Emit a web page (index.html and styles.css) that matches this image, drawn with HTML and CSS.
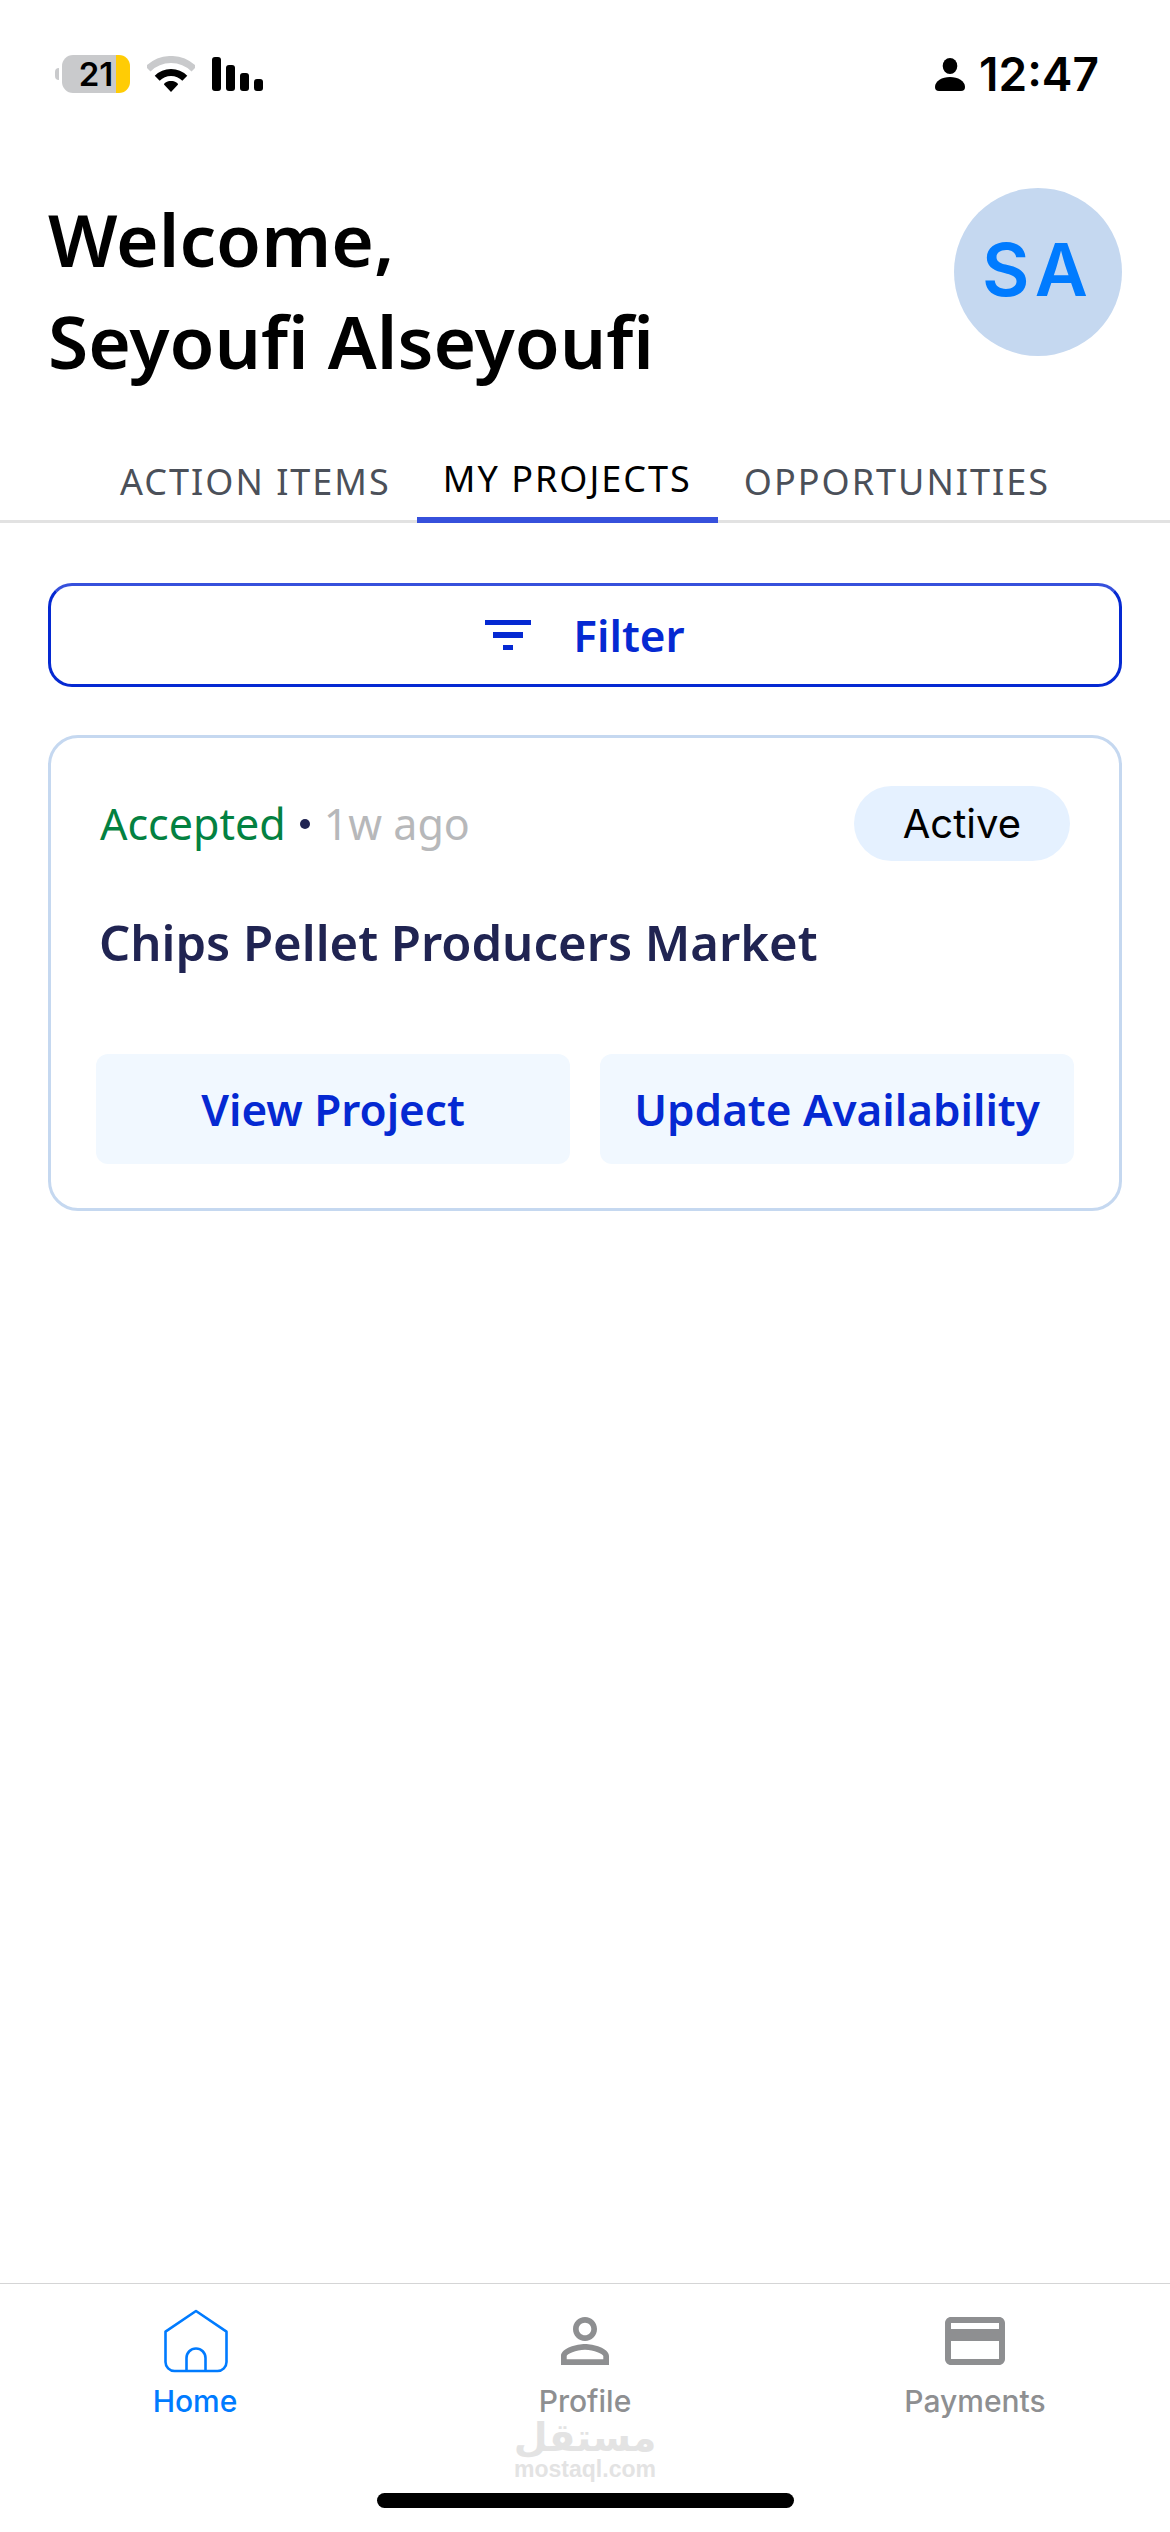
FILE: index.html
```html
<!DOCTYPE html>
<html lang="en">
  <head>
    <meta charset="UTF-8" />
    <meta name="viewport" content="width=device-width" />
    <title>My Projects</title>
    <link rel="stylesheet" href="styles.css">
  </head>
  <body>
    <div class="status_bar">
      <div class="status_bar__group">
        <div class="battery">
          <span class="battery__tip"></span>
          <span class="battery__level">21</span>
        </div>
        <svg class="status_bar__wifi" width="48" height="36" viewBox="0 0 48 36" fill="none" aria-hidden="true">
          <path d="M1 13a32.5 32.5 0 0 1 46 0" stroke="#c9cacc" stroke-width="7" />
          <path d="M10.2 22.2a19.5 19.5 0 0 1 27.6 0" stroke="#000" stroke-width="7" />
          <path d="M24 36l-7-7.5c0-1.5 3-3.5 7-3.5s7 2 7 3.5z" fill="#000" />
        </svg>
        <svg class="status_bar__signal" width="51" height="34" viewBox="0 0 51 34" aria-hidden="true">
          <rect x="0" y="0" width="9" height="34" rx="3" />
          <rect x="14" y="8" width="9" height="26" rx="3" />
          <rect x="28" y="16" width="9" height="18" rx="3" />
          <rect x="42" y="22" width="9" height="12" rx="3" />
        </svg>
      </div>
      <div class="status_bar__group status_bar__group--clock">
        <svg width="30" height="33" viewBox="0 0 30 33" aria-hidden="true">
          <ellipse cx="15" cy="8" rx="7.3" ry="8" />
          <path d="M0 29c0-6 7-10 15-10s15 4 15 10q0 4-4 4H4q-4 0-4-4z" />
        </svg>
        <time class="status_bar__time">12:47</time>
      </div>
    </div>

    <header class="header">
      <h1 class="header__title">Welcome,<br />Seyoufi Alseyoufi</h1>
      <div class="avatar">SA</div>
    </header>

    <nav class="tabs">
      <a href="#action-items" class="tabs__item">ACTION ITEMS</a>
      <a href="#my-projects" class="tabs__item tabs__item--active" aria-current="page">MY PROJECTS</a>
      <a href="#opportunities" class="tabs__item">OPPORTUNITIES</a>
    </nav>

    <main class="main">
      <button type="button" class="filter">
        <svg width="46" height="30" viewBox="0 0 46 30" fill="currentColor" aria-hidden="true">
          <path d="M0 0h46v5H0zM8 12h30v6H8zM18 25h10v5H18z" />
        </svg>
        Filter
      </button>

      <article class="project">
        <div class="project__head">
          <p class="project__status">
            <span class="project__state">Accepted</span>
            <span class="project__dot"></span>
            <span class="project__date">1w ago</span>
          </p>
          <span class="badge">Active</span>
        </div>
        <h2 class="project__title">Chips Pellet Producers Market</h2>
        <div class="project__actions">
          <button type="button" class="project__button">View Project</button>
          <button type="button" class="project__button">Update Availability</button>
        </div>
      </article>
    </main>

    <footer class="footer">
      <nav class="menu">
        <a href="#home" class="menu__item menu__item--active">
          <svg width="72" height="72" viewBox="0 0 72 72" fill="none" stroke="currentColor" stroke-width="2.6" stroke-linejoin="round" aria-hidden="true">
            <path d="M37 6l30.5 20.7V57a9 9 0 0 1-9 9h-43a9 9 0 0 1-9-9V26.7z" />
            <path d="M27.5 66V53a9.500 9.500 0 0 1 19 0v13" />
          </svg>
          Home
        </a>
        <a href="#profile" class="menu__item">
          <svg width="72" height="72" viewBox="0 0 24 24" fill="currentColor" aria-hidden="true">
            <path d="M12 5.9c1.16 0 2.1.94 2.1 2.1s-.94 2.1-2.1 2.1S9.900 9.160 9.900 8s.94-2.100 2.100-2.100m0 9c2.970 0 6.100 1.460 6.100 2.100v1.100H5.900V17c0-.64 3.130-2.100 6.100-2.100M12 4C9.790 4 8 5.790 8 8s1.790 4 4 4 4-1.790 4-4-1.790-4-4-4zm0 9c-2.670 0-8 1.340-8 4v3h16v-3c0-2.660-5.330-4-8-4z" />
          </svg>
          Profile
        </a>
        <a href="#payments" class="menu__item">
          <svg width="72" height="72" viewBox="0 0 24 24" fill="currentColor" aria-hidden="true">
            <path d="M20 4H4c-1.110 0-1.990.89-1.990 2L2 18c0 1.110.89 2 2 2h16c1.110 0 2-.89 2-2V6c0-1.110-.89-2-2-2zm0 14H4v-6h16v6zm0-10H4V6h16v2z" />
          </svg>
          Payments
        </a>
      </nav>
      <div class="watermark">
        <span class="watermark__logo" lang="ar" dir="rtl">مستقل</span>
        <span class="watermark__domain">mostaql.com</span>
      </div>
      <div class="home_indicator"></div>
    </footer>
  </body>
</html>
```

FILE: styles.css
```css
:root {
  --color-black: #000;
  --color-navy: #202452;
  --color-blue: #0529d2;
  --color-blue-light: #3650dc;
  --color-azure: #007bff;
  --color-sky: #c5d8f0;
  --color-gray: #8e8f91;
  --font-text: 'Noto Sans', 'Open Sans', sans-serif;
  --font-system: Inter, 'Liberation Sans', sans-serif;
}
* {
  margin: 0;
  padding: 0;
  box-sizing: border-box;
}
body {
  display: flex;
  flex-direction: column;
  min-height: 100vh;
  background-color: #fff;
  color: var(--color-black);
  font-family: var(--font-text);
}
a {
  color: inherit;
  text-decoration: none;
}
button {
  border: none;
  color: var(--color-blue);
  font-family: inherit;
  font-size: 44px;
  font-weight: 600;
  cursor: pointer;
}
/* status bar */
.status_bar {
  display: flex;
  align-items: center;
  justify-content: space-between;
  height: 148px;
  padding: 0 71px 0 55px;
  font-family: var(--font-system);
  font-weight: 600;
}
.status_bar__group {
  display: flex;
  align-items: center;
  gap: 17px;
}
.status_bar__group--clock {
  gap: 14px;
}
.status_bar__time {
  font-size: 46px;
}
.battery {
  display: flex;
  align-items: center;
  gap: 3px;
}
.battery__tip {
  width: 4px;
  height: 12px;
  border-radius: 4px 0 0 4px;
  background-color: #c9cacc;
}
.battery__level {
  width: 68px;
  border-radius: 11px;
  background: linear-gradient(to right, #c9cacc 54px, #ffcc05 54px);
  font-size: 33px;
  line-height: 38px;
  text-align: center;
}
/* header */
.header {
  display: flex;
  align-items: flex-start;
  justify-content: space-between;
  padding: 40px 48px 0;
}
.header__title {
  font-size: 73px;
  font-weight: 600;
  line-height: 102px;
}
.avatar {
  flex: none;
  width: 168px;
  height: 168px;
  border-radius: 50%;
  background-color: var(--color-sky);
  color: var(--color-azure);
  font-family: var(--font-system);
  font-size: 73px;
  font-weight: 600;
  letter-spacing: 6px;
  line-height: 164px;
  text-align: center;
}
/* tabs */
.tabs {
  display: flex;
  align-items: flex-end;
  justify-content: center;
  margin-top: 47px;
  border-bottom: 3px solid #e2e2e2;
}
.tabs__item {
  padding: 20px 26px 18px;
  color: #4b5059;
  font-size: 36px;
  letter-spacing: 2px;
  line-height: 40px;
}
.tabs__item--active {
  margin-bottom: -3px;
  border-bottom: 6px solid var(--color-blue-light);
  color: var(--color-black);
}
/* content */
.main {
  flex: 1;
  padding: 60px 48px;
}
.filter {
  display: flex;
  align-items: center;
  justify-content: center;
  gap: 42px;
  width: 100%;
  height: 104px;
  border: 3px solid var(--color-blue);
  border-top-color: var(--color-blue-light);
  border-radius: 24px;
  background-color: transparent;
}
/* project card */
.project {
  margin-top: 48px;
  padding: 48px 45px 44px;
  border: 3px solid var(--color-sky);
  border-radius: 30px;
}
.project__head {
  display: flex;
  align-items: center;
  justify-content: space-between;
  padding: 0 4px;
}
.project__status {
  display: flex;
  align-items: center;
  gap: 14px;
  font-size: 43px;
  line-height: 60px;
}
.project__state {
  color: #038141;
}
.project__dot {
  width: 10px;
  height: 10px;
  border-radius: 50%;
  background-color: var(--color-navy);
}
.project__date {
  color: #b7b8ba;
}
.badge {
  padding: 0 49px;
  border-radius: 38px;
  background-color: #e5f1ff;
  font-family: var(--font-system);
  font-size: 40px;
  line-height: 75px;
}
.project__title {
  margin-top: 47px;
  padding: 0 3px;
  color: var(--color-navy);
  font-size: 49px;
  font-weight: 600;
  line-height: 68px;
}
.project__actions {
  display: grid;
  grid-template-columns: 1fr 1fr;
  gap: 30px;
  margin-top: 78px;
}
.project__button {
  height: 110px;
  border-radius: 12px;
  background-color: #f1f8ff;
}
/* bottom menu */
.footer {
  position: relative;
  padding: 21px 0 24px;
  border-top: 1px solid #d5d5d6;
}
.menu {
  display: grid;
  grid-template-columns: repeat(3, 1fr);
}
.menu__item {
  display: flex;
  flex-direction: column;
  align-items: center;
  gap: 6px;
  color: var(--color-gray);
  font-family: var(--font-system);
  font-size: 30px;
  font-weight: 500;
  line-height: 36px;
}
.menu__item--active {
  color: var(--color-azure);
}
.home_indicator {
  width: 417px;
  height: 15px;
  margin: 74px auto 0;
  border-radius: 8px;
  background-color: var(--color-black);
}
/* watermark over the menu */
.watermark {
  display: flex;
  flex-direction: column;
  align-items: center;
  position: absolute;
  right: 0;
  bottom: 50px;
  left: 0;
  color: #e3e3e3;
  font-weight: 700;
  pointer-events: none;
}
.watermark__logo {
  font-family: 'DejaVu Sans', sans-serif;
  font-size: 39px;
  line-height: 36px;
}
.watermark__domain {
  font-family: 'Liberation Sans', sans-serif;
  font-size: 23px;
  line-height: 26px;
}
```
